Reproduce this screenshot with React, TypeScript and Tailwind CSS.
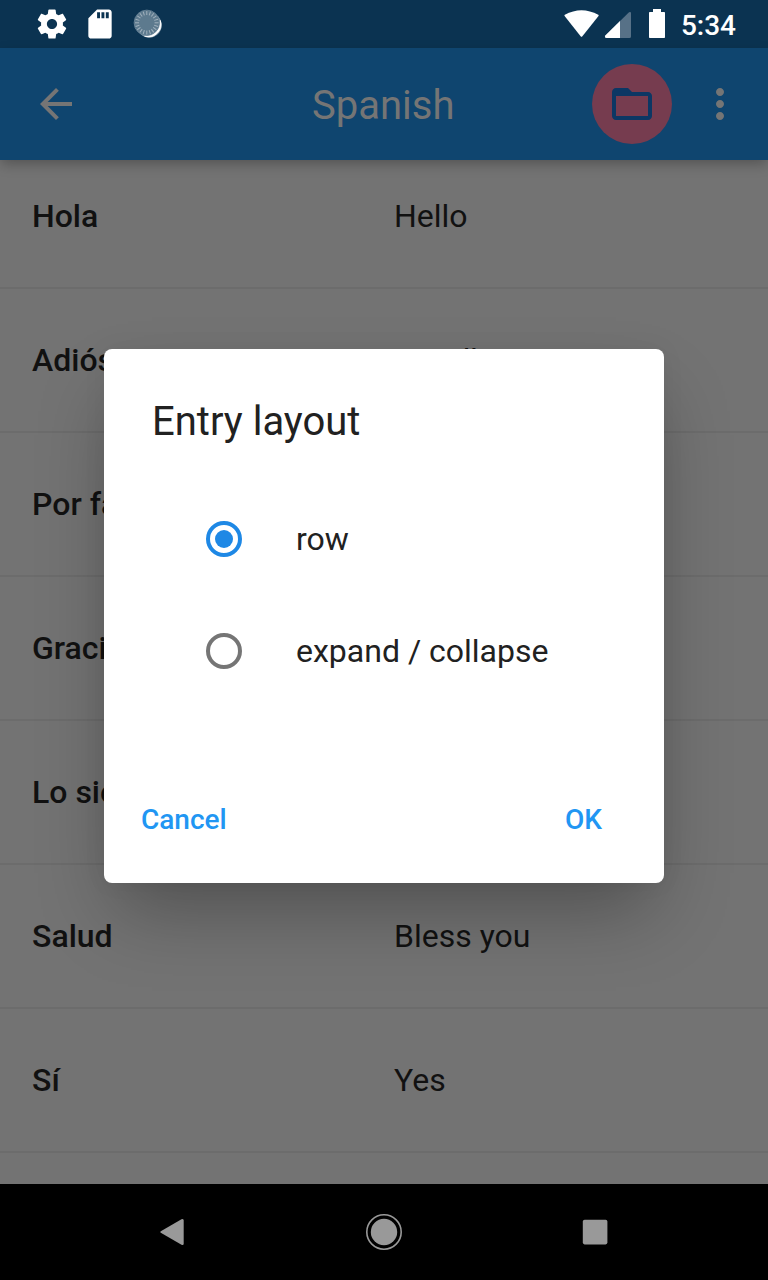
import React from "react";

const entries = [
  ["Hola", "Hello"],
  ["Adiós", "Goodbye"],
  ["Por favor", ""],
  ["Gracias", ""],
  ["Lo siento", ""],
  ["Salud", "Bless you"],
  ["Sí", "Yes"],
];

function StatusBar() {
  const ticks = Array.from({ length: 20 }, (_, i) => i * 18);
  return (
    <div className="flex h-12 shrink-0 items-center bg-[#0b3351] pl-[34px] pr-8 text-white">
      <svg className="size-9" viewBox="-0.34 -0.34 24.68 24.68" fill="currentColor">
        <path d="M19.43 12.98c.04-.32.07-.64.07-.98s-.03-.66-.07-.98l2.11-1.65c.19-.15.24-.42.12-.64l-2-3.46c-.12-.22-.39-.3-.61-.22l-2.49 1c-.52-.4-1.08-.73-1.69-.98l-.38-2.65C14.46 2.18 14.25 2 14 2h-4c-.25 0-.46.18-.49.42l-.38 2.65c-.61.25-1.17.59-1.69.98l-2.49-1c-.23-.09-.49 0-.61.22l-2 3.46c-.13.22-.07.49.12.64l2.11 1.65c-.04.32-.07.65-.07.98s.03.66.07.98l-2.11 1.65c-.19.15-.24.42-.12.64l2 3.46c.12.22.39.3.61.22l2.49-1c.52.4 1.08.73 1.69.98l.38 2.65c.03.24.24.42.49.42h4c.25 0 .46-.18.49-.42l.38-2.65c.61-.25 1.17-.59 1.69-.98l2.49 1c.23.09.49 0 .61-.22l2-3.46c.12-.22.07-.49-.12-.64l-2.11-1.65zM12 15.5c-1.93 0-3.5-1.57-3.5-3.5s1.57-3.5 3.5-3.5 3.5 1.57 3.5 3.5-1.57 3.5-3.5 3.5z" />
      </svg>
      <svg className="ml-3 size-9" viewBox="-0.34 -0.34 24.68 24.68" fill="currentColor">
        <path d="M18 2h-8L4.02 8 4 20c0 1.1.9 2 2 2h12c1.1 0 2-.9 2-2V4c0-1.1-.9-2-2-2zm-6 6h-2V4h2v4zm3 0h-2V4h2v4zm3 0h-2V4h2v4z" />
      </svg>
      <svg className="ml-[14px] size-8" viewBox="0 0 32 32">
        <circle cx="17.2" cy="17.2" r="12.5" fill="#8299a9" />
        <path d="M28.2 12.5 A12.2 12.2 0 0 1 12.6 28 A14 14 0 0 0 28.2 12.5Z" fill="#fff" stroke="#fff" strokeWidth="1" />
        <circle cx="14.8" cy="14.8" r="12.6" fill="#5d7a8e" />
        <circle cx="14.8" cy="14.8" r="12.7" fill="none" stroke="#6c8799" strokeWidth=".8" />
        {ticks.map((a) => (
          <path key={a} d="M14.8 3v4" stroke="#a1b1bd" strokeWidth="1" transform={`rotate(${a} 14.8 14.8)`} />
        ))}
      </svg>
      <div className="flex-1" />
      <svg className="h-12 w-[104px]" viewBox="0 0 104 48" fill="currentColor">
        <path d="M.6 16Q.1 15.2 .8 14.7Q17.5 5.6 34.3 14.7Q35 15.2 34.5 16L18.4 36.2Q17.5 37.3 16.6 36.2Z" />
        <path d="M65 12.2Q67 11.4 67 13V36.5Q67 38 65.5 38H42.5Q40.2 37.8 41.3 35.6Z" fill="#577187" />
        <path d="M56 20.9V38H42.5Q40.2 37.8 41.3 35.6Z" />
        <path d="M89 9h8v3h3.2q.8 0 .8.8v24.4q0 .8-.8.8H85.8q-.8 0-.8-.8V12.8q0-.8.8-.8H89Z" />
      </svg>
      <span className="ml-[13px] mt-1 text-[28px] font-medium leading-8">5:34</span>
    </div>
  );
}

function AppBar() {
  return (
    <header className="z-10 flex h-28 shrink-0 items-center bg-[#0f456f] px-8 text-[#757575] shadow-[0_5px_12px_-1px_rgba(0,0,0,0.27)]">
      <svg className="size-12" viewBox="0 0 24 24" fill="currentColor">
        <path d="M20 11H7.83l5.59-5.59L12 4l-8 8 8 8 1.41-1.41L7.83 13H20v-2z" />
      </svg>
      <h1 className="ml-[96px] flex-1 pl-[136px] pt-[3px] text-[40px] leading-[48px]">Spanish</h1>
      <button className="flex size-20 items-center justify-center rounded-full bg-[#763c4f] text-[#0c3764]">
        <svg className="size-12" viewBox="0 0 24 24" fill="currentColor">
          <path d="M4 4C2.9 4 2.01 4.9 2.01 6L2 18c0 1.1.9 2 2 2h16c1.1 0 2-.9 2-2V8c0-1.1-.9-2-2-2h-8l-2-2H4zm16 14H4V8h16v10z" />
        </svg>
      </button>
      <svg className="-mr-2 ml-6 size-12" viewBox="0 0 24 24" fill="currentColor">
        <path d="M12 8c1.1 0 2-.9 2-2s-.9-2-2-2-2 .9-2 2 .9 2 2 2zm0 2c-1.1 0-2 .9-2 2s.9 2 2 2 2-.9 2-2-.9-2-2-2zm0 6c-1.1 0-2 .9-2 2s.9 2 2 2 2-.9 2-2-.9-2-2-2z" />
      </svg>
    </header>
  );
}

function EntryList() {
  return (
    <main className="min-h-0 flex-1 overflow-hidden">
      <div className="-mt-[15px]">
        {entries.map(([word, translation]) => (
          <div key={word} className="flex h-36 items-center border-b-2 border-[#6c6c6c] pl-8 text-[32px] leading-9 text-[#111]">
            <span className="w-[362px] font-medium">{word}</span>
            <span>{translation}</span>
          </div>
        ))}
      </div>
    </main>
  );
}

function NavBar() {
  return (
    <nav className="flex h-24 shrink-0 items-center justify-between bg-black pl-[154px] pr-[155px] text-[#999]">
      <svg className="size-9" viewBox="0 0 36 36" fill="currentColor">
        <path d="M6.8 17.2L27.5 5.2Q29.7 4.3 29.7 6.5V29.5Q29.7 31.7 27.5 30.8L6.8 18.8Q5.6 18 6.8 17.2Z" />
      </svg>
      <svg className="size-9" viewBox="0 0 36 36">
        <circle cx="18" cy="18" r="17.2" fill="none" stroke="currentColor" strokeWidth="1.6" />
        <circle cx="18" cy="18" r="13.2" fill="currentColor" />
      </svg>
      <svg className="size-9" viewBox="0 0 36 36" fill="currentColor">
        <rect x="5.8" y="5.8" width="24.6" height="24.6" rx="1.8" />
      </svg>
    </nav>
  );
}

function Option({ label, selected }: { label: string; selected?: boolean }) {
  return (
    <label className="flex h-28 items-center pl-[102px]">
      <span
        className={
          selected
            ? "flex size-9 items-center justify-center rounded-full border-4 border-[#1e88e5]"
            : "flex size-9 items-center justify-center rounded-full border-4 border-[#757575]"
        }
      >
        {selected && <span className="size-[18px] rounded-full bg-[#1e88e5]" />}
      </span>
      <span className="ml-[54px] text-[32px] leading-9">{label}</span>
    </label>
  );
}

function LayoutDialog() {
  return (
    <div className="absolute inset-0 z-20 flex items-start justify-center pt-[349px]">
      <section
        role="dialog"
        className="flex h-[534px] w-[560px] flex-col rounded-lg bg-white text-[#212121] shadow-[0_38px_72px_-12px_rgba(0,0,0,0.3),0_0_24px_0_rgba(0,0,0,0.05)]"
      >
        <h2 className="pl-12 pt-[49px] text-[40px] leading-[48px]">Entry layout</h2>
        <div className="mt-[37px]">
          <Option label="row" selected />
          <Option label="expand / collapse" />
        </div>
        <div className="mt-[95px] flex justify-between pl-[37px] pr-[62px] text-[28px] font-medium leading-9 text-[#2196f3]">
          <button>Cancel</button>
          <button>OK</button>
        </div>
      </section>
    </div>
  );
}

export default function App() {
  return (
    <div className="relative flex h-[1280px] w-[768px] flex-col overflow-hidden bg-[#737373] font-[Roboto,sans-serif]">
      <StatusBar />
      <AppBar />
      <EntryList />
      <NavBar />
      <LayoutDialog />
    </div>
  );
}
